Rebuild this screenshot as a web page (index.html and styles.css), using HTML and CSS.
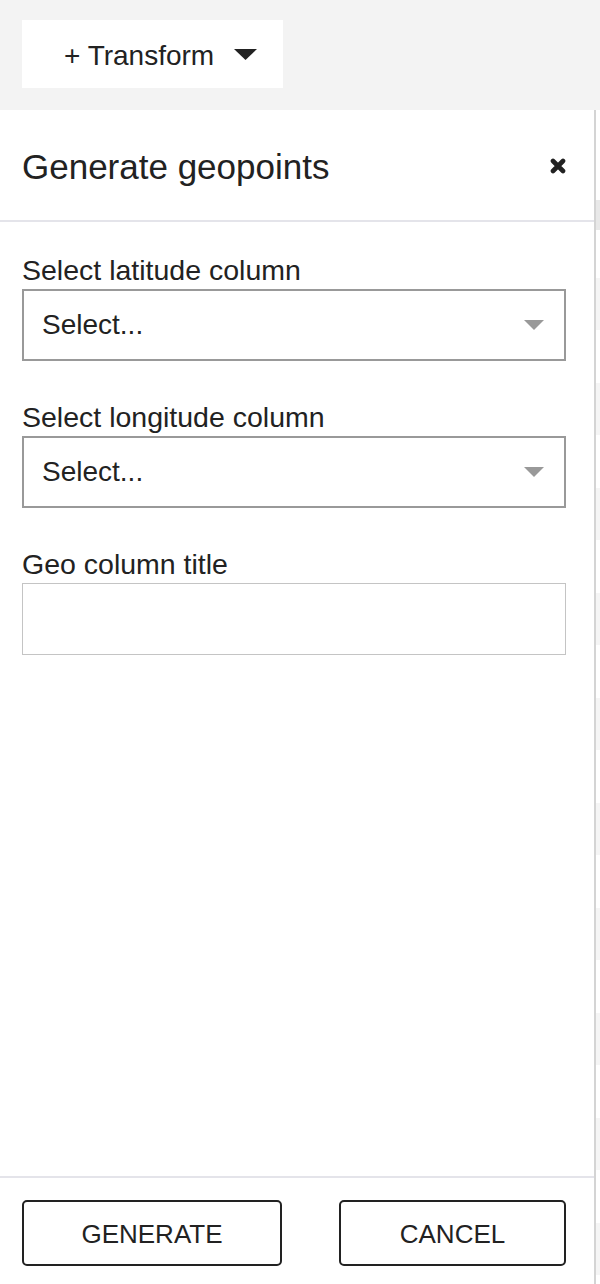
FILE: index.html
```html
<!DOCTYPE html>
<html lang="en">
<head>
<meta charset="utf-8">
<title>Generate geopoints</title>
<link rel="stylesheet" href="styles.css">
</head>
<body>
<div class="app">
  <div class="toolbar">
    <button class="transform-btn" type="button">
      <span>+ Transform</span>
      <svg class="caret" width="23" height="11" viewBox="0 0 23 11"><path d="M0 0H23L11.5 11Z" fill="#222"/></svg>
    </button>
  </div>
  <div class="main">
    <aside class="panel">
      <header class="panel-header">
        <h1>Generate geopoints</h1>
        <button class="close" type="button" aria-label="Close">
          <svg width="16" height="16" viewBox="0 0 16 16"><path d="M3 3L13 13M13 3L3 13" stroke="#222" stroke-width="4.6" stroke-linecap="round"/></svg>
        </button>
      </header>
      <div class="panel-body">
        <div class="field">
          <label class="field-label">Select latitude column</label>
          <div class="select">
            <span>Select...</span>
            <svg width="20" height="10" viewBox="0 0 20 10"><path d="M0 0H20L10 10Z" fill="#999"/></svg>
          </div>
        </div>
        <div class="field">
          <label class="field-label">Select longitude column</label>
          <div class="select">
            <span>Select...</span>
            <svg width="20" height="10" viewBox="0 0 20 10"><path d="M0 0H20L10 10Z" fill="#999"/></svg>
          </div>
        </div>
        <div class="field">
          <label class="field-label">Geo column title</label>
          <div class="text-input"></div>
        </div>
      </div>
      <footer class="panel-footer">
        <button class="btn btn-generate" type="button">GENERATE</button>
        <button class="btn btn-cancel" type="button">CANCEL</button>
      </footer>
    </aside>
    <div class="table-peek"></div>
  </div>
</div>
</body>
</html>
```

FILE: styles.css
```css
* { box-sizing: border-box; }
html, body { margin: 0; padding: 0; }
body {
  width: 600px;
  height: 1284px;
  overflow: hidden;
  background: #f3f3f3;
  color: #222;
  font-family: "Liberation Sans", Arial, sans-serif;
}
.app {
  display: flex;
  flex-direction: column;
  height: 1284px;
}
.toolbar {
  flex: none;
  height: 110px;
  padding: 20px 22px 22px;
}
.transform-btn {
  display: flex;
  align-items: center;
  gap: 20px;
  width: 261px;
  height: 68px;
  padding: 3px 0 0 42px;
  background: #fff;
  border: 0;
  color: #222;
  font-family: "Liberation Sans", Arial, sans-serif;
  font-size: 28px;
}
.transform-btn .caret { margin-top: -3px; }
.main {
  flex: 1;
  display: flex;
  min-height: 0;
}
.panel {
  flex: none;
  width: 596px;
  background: #fff;
  border-right: 2px solid #d4d4d4;
  display: flex;
  flex-direction: column;
}
.panel-header {
  flex: none;
  height: 112px;
  border-bottom: 2px solid #e4e4ea;
  display: flex;
  align-items: center;
  justify-content: space-between;
  padding: 0 28px 0 22px;
}
.panel-header h1 {
  margin: 4px 0 0;
  font-weight: 400;
  font-size: 35px;
}
.close {
  border: 0;
  background: none;
  padding: 0;
  width: 16px;
  height: 16px;
  display: flex;
  margin-top: 2px;
}
.panel-body {
  flex: 1;
  padding: 31px 28px 0 22px;
  display: flex;
  flex-direction: column;
  gap: 39px;
}
.field-label {
  display: block;
  font-size: 28.5px;
  line-height: 32px;
  padding-top: 1px;
  margin-bottom: 3px;
}
.select {
  height: 72px;
  border: 2px solid #999;
  display: flex;
  align-items: center;
  justify-content: space-between;
  padding: 0 20px 0 18px;
  font-size: 28px;
}
.text-input {
  height: 72px;
  border: 1px solid #c4c4c4;
}
.panel-footer {
  flex: none;
  height: 108px;
  border-top: 2px solid #e4e4ea;
  padding: 22px 28px 18px 22px;
  display: flex;
  justify-content: space-between;
}
.btn {
  height: 66px;
  border: 2px solid #222;
  border-radius: 5px;
  background: #fff;
  color: #222;
  font-family: "Liberation Sans", Arial, sans-serif;
  font-size: 26px;
  padding: 2px 0 0;
}
.btn-generate { width: 260px; }
.btn-cancel { width: 227px; }
.table-peek {
  flex: 1;
  background:
    linear-gradient(#e8e8e8, #e8e8e8) 0 90px / 100% 30px no-repeat,
    repeating-linear-gradient(#fff 0 53px, #f5f5f5 53px 105px) 0 115px / 100% 100% no-repeat,
    #fff;
}
```
